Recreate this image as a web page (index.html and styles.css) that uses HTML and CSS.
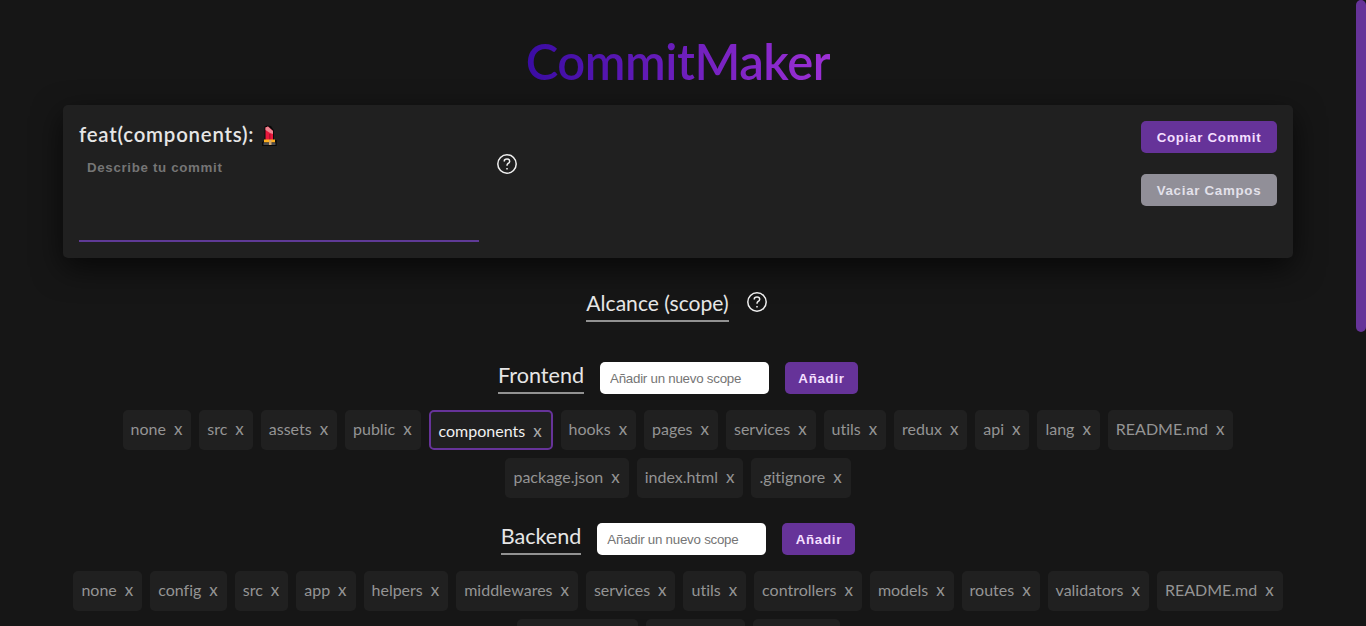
FILE: index.html
```
<!DOCTYPE html>
<html lang="es">
<head>
<meta charset="utf-8">
<title>CommitMaker</title>
<link rel="stylesheet" href="styles.css">
</head>
<body>
<div class="page">
<main class="content">
  <h1 class="title">CommitMaker</h1>
  <section class="card">
    <div class="commit">
      <div class="prefix"><span>feat(components):</span>
        <svg class="emoji" viewBox="0 0 18 22"><path d="M3.500 1.500L6 .5l4 .5 3 4.500V15h2.700v6H1v-4l2.500-1z" fill="#090909"/><path d="M4.500 2.500L7 1.500 12 6v9H4.500z" fill="#e8183c"/><path d="M4.500 2.500L7 1.500 12 6v3L9 8 4.500 5z" fill="#ee8490"/><path d="M8 9h1.500v6H8z" fill="#b80f30"/><path d="M3 14.500h11v3H3z" fill="#ffb01e"/><path d="M2.500 17.500h12v2.500h-12z" fill="#4b4b4e"/><path d="M8 15h2.500v5H8z" fill="#d5a76a"/></svg>
      </div>
      <div class="field-row">
        <textarea class="message" placeholder="Describe tu commit"></textarea>
        <svg class="help" viewBox="0 0 20 20"><circle cx="10" cy="10" r="9.200"/><path d="M7.300 7.500V7q0-2 2.700-2t2.700 2.200Q12.700 8.700 11 9.500q-1 .6-1 2.300M10 14v1.600"/></svg>
      </div>
    </div>
    <div class="actions">
      <button class="btn wide">Copiar Commit</button>
      <button class="btn wide muted">Vaciar Campos</button>
    </div>
  </section>
  <div class="scope"><h2>Alcance (scope)</h2><svg class="help" viewBox="0 0 20 20"><circle cx="10" cy="10" r="9.200"/><path d="M7.300 7.500V7q0-2 2.700-2t2.700 2.200Q12.700 8.700 11 9.500q-1 .6-1 2.300M10 14v1.600"/></svg></div>
  <section class="group">
    <div class="group-head"><h2>Frontend</h2><input class="new-scope" placeholder="Añadir un nuevo scope"><button class="btn">Añadir</button></div>
    <div class="chips">
      <div class="chip">none<i>x</i></div><div class="chip">src<i>x</i></div><div class="chip">assets<i>x</i></div><div class="chip">public<i>x</i></div><div class="chip selected">components<i>x</i></div><div class="chip">hooks<i>x</i></div><div class="chip">pages<i>x</i></div><div class="chip">services<i>x</i></div><div class="chip">utils<i>x</i></div><div class="chip">redux<i>x</i></div><div class="chip">api<i>x</i></div><div class="chip">lang<i>x</i></div><div class="chip">README.md<i>x</i></div><div class="chip">package.json<i>x</i></div><div class="chip">index.html<i>x</i></div><div class="chip">.gitignore<i>x</i></div>
    </div>
  </section>
  <section class="group">
    <div class="group-head"><h2>Backend</h2><input class="new-scope" placeholder="Añadir un nuevo scope"><button class="btn">Añadir</button></div>
    <div class="chips">
      <div class="chip">none<i>x</i></div><div class="chip">config<i>x</i></div><div class="chip">src<i>x</i></div><div class="chip">app<i>x</i></div><div class="chip">helpers<i>x</i></div><div class="chip">middlewares<i>x</i></div><div class="chip">services<i>x</i></div><div class="chip">utils<i>x</i></div><div class="chip">controllers<i>x</i></div><div class="chip">models<i>x</i></div><div class="chip">routes<i>x</i></div><div class="chip">validators<i>x</i></div><div class="chip">README.md<i>x</i></div><div class="chip large"></div><div class="chip medium"></div><div class="chip small"></div>
    </div>
  </section>
</main>
<div class="scroll-track"><div class="scroll-thumb"></div></div>
</div>
</body>
</html>
```
FILE: styles.css
```
* { box-sizing: border-box; }
body { margin: 0; overflow: hidden; background: #161616; color: #e6e6e6; font-family: Lato, sans-serif; font-variant-ligatures: no-common-ligatures; }
.page { display: flex; height: 626px; overflow: hidden; }
.content { flex: 1; min-width: 0; padding: 31px 63px 0; }
.scroll-track { width: 10px; }
.scroll-thumb { height: 332px; background: #663399; border-radius: 5px; }
.title { width: max-content; margin: 0 auto 14px; font-size: 49px; line-height: 60px; font-weight: 600; letter-spacing: -.45px; color: transparent; background: linear-gradient(90deg, #3a0ca3, #9d30d5); background-clip: text; -webkit-background-clip: text; }
.card { display: flex; justify-content: space-between; height: 153px; padding: 16px; background: #202020; border-radius: 5px; box-shadow: 0 10px 30px rgba(0,0,0,.65); }
.prefix { display: flex; align-items: center; gap: 7px; height: 26px; font-size: 20.400px; font-weight: 600; letter-spacing: .8px; }
.emoji { width: 18px; height: 22px; margin-top: 3px; }
.field-row { display: flex; gap: 18px; margin-top: 7px; }
.message { display: block; width: 400px; height: 88px; padding: 6px 8px; border: 0; border-bottom: 2px solid #5f3a96; outline: 0; resize: none; background: transparent; color: #fff; font: bold 13.333px "Liberation Sans", Arial, sans-serif; letter-spacing: .66px; }
.message::placeholder { color: #757575; }
.help { width: 20px; height: 20px; fill: none; stroke: #f0f0f0; stroke-width: 1.500; }
.actions { display: flex; flex-direction: column; gap: 21px; }
.btn { width: 73px; height: 32px; padding: 0; border: 0; border-radius: 5px; background: #663399; color: #f4dfff; font: bold 13.333px "Liberation Sans", Arial, sans-serif; letter-spacing: .7px; }
.wide { width: 136px; }
.muted { background: #918f98; color: #e3e1ea; }
h2 { margin: 0; font-size: 21.600px; line-height: 26px; font-weight: 400; border-bottom: 2px solid #929292; }
.scope { display: flex; justify-content: center; gap: 18px; height: 32px; margin-top: 34px; padding-right: 3px; align-items: flex-start; }
.scope h2 { margin-top: -2px; height: 32px; font-size: 21.100px; }
.group { padding-top: 16px; }
.scope + .group { padding-top: 38px; }
.group-head { display: flex; justify-content: center; gap: 16px; height: 32px; }
.group-head h2 { height: 32px; }
.new-scope { width: 169px; height: 32px; border: 0; border-radius: 5px; padding: 0 10px; background: #fff; font: 13.333px "Liberation Sans", Arial, sans-serif; letter-spacing: -.25px; }
.new-scope::placeholder { color: #757575; }
.chips { display: flex; flex-wrap: wrap; justify-content: center; gap: 8px; margin-top: 16px; padding-bottom: 9px; }
.chip { display: flex; height: 40px; padding: 8px; background: #202020; border-radius: 5px; color: #949494; font-size: 16px; line-height: 21px; }
.chip i { width: 9.400px; margin-left: 8px; font-style: normal; font-size: 17px; }
.selected { border: 2px solid #663399; color: #f0f0f0; }
.selected i { color: #aaa; }
.large { width: 121px; }
.medium { width: 99px; }
.small { width: 87px; }
```
